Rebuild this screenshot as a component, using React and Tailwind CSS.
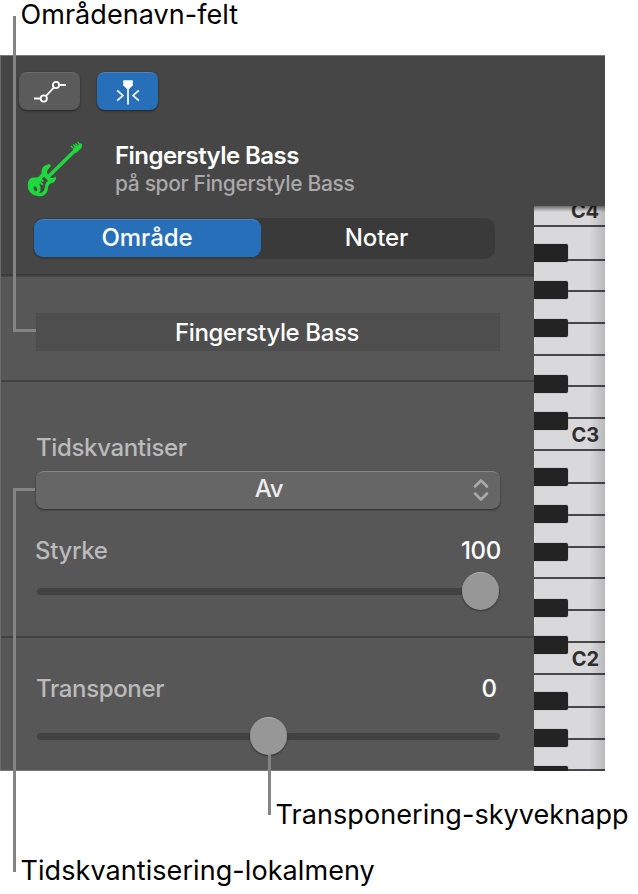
import React from 'react'

// key heights from the top of the visible keyboard, one per white key
const whiteKeys = [
    { h: 21, label: 'C4' }, { h: 34 }, { h: 31 }, { h: 32 }, { h: 32 }, { h: 31 }, { h: 32 },
    { h: 32, label: 'C3' }, { h: 33 }, { h: 32 }, { h: 32 }, { h: 31 }, { h: 32 }, { h: 32 },
    { h: 32, label: 'C2' }, { h: 33 }, { h: 32 }, { h: 31 },
]
const blackKeys = [38, 75, 112.5, 168.5, 205.5, 262, 299, 336.5, 392.5, 429.5, 486, 523, 560]

const Keyboard = () => {
    return <div className="relative w-[71px] h-[565px] shrink-0 overflow-hidden bg-[#d9d9db]">
        {whiteKeys.map((key, i) =>
            <div key={i} className="flex items-end justify-end border-b-2 border-[#49474a] pr-[6px] pb-[2px]" style={{ height: key.h }}>
                {key.label && <span className="text-[20px] leading-[24px] font-bold tracking-[-0.1px] text-[#303030]">{key.label}</span>}
            </div>
        )}
        <div className="absolute inset-y-0 right-0 w-4 bg-gradient-to-r from-transparent to-black/15" />
        <div className="absolute inset-x-0 top-0 h-1.5 bg-gradient-to-b from-black/50 to-transparent" />
        {blackKeys.map((top) =>
            <div key={top} className="absolute left-0 h-[18px] w-[34px] rounded-r-[2px] bg-[#232323] shadow-[0_0_1px_#555]" style={{ top: top }} />
        )}
    </div>
}

const Bass = () => {
    return <svg className="h-[56px] w-[56px] overflow-visible" viewBox="0 0 56 56" fill="none">
        <path d="M19 37 L47 9.5" stroke="#1fd83c" strokeWidth="3.4" />
        <path d="M44.8 8.5 L47.5 4.5 L50 4.5 L52 2.3 L54 3 L53.6 7 L48 12 L45.5 11.5 Z" fill="#1fd83c" />
        <path d="M43 5 l2 2 M45.2 3.6 l2 2 M47.4 2.4 l2 2 M49.8 .8 l1.6 2.6" stroke="#1fd83c" strokeWidth="1.4" />
        <path fillRule="evenodd" d="M.7 39.5 Q2 37 4.7 36.6 Q9 36.6 11 35.4 Q13.6 33.6 13.6 31 Q13.8 26.5 16.2 25 L20.7 22.9 Q23 23.2 23 25 Q21.5 26.5 20.3 28 Q18.6 29.8 19 32 L22.5 36.8 Q25.5 37.6 27.7 35.5 Q28.6 37.6 27 40 Q25.7 42.2 22.4 42.6 Q20.2 43.6 20 46.5 Q19.8 51.5 16 54.2 Q13.8 55.6 9.5 54.9 Q4.5 54.3 2 51.2 Q-.4 48.5 -.2 44 Q-.2 41 .7 39.5 Z M16.2 35.8 L20 39.8 Q17.6 41.6 17.2 44 Q17 49 14.6 51 Q13 52.4 11 52 Q13 49.5 12.6 47 Q12.3 44.8 11.4 43.2 Q13.4 41.4 13.6 39 Q14.2 36.6 16.2 35.8 Z M6 45.2 Q8.8 45.4 9.2 48 Q9.2 50.2 7.9 50.4 Q5.6 49 5.4 46.8 Z" fill="#1fd83c" />
        <path d="M13.4 38.6 L15.4 40.6 M12.4 41.4 L14.8 43.8" stroke="#1fd83c" strokeWidth="1.7" />
    </svg>
}

const Slider = (props) => {
    return <div className="relative flex h-[38px] w-[463px] items-center">
        <div className="h-[7px] w-full rounded-full bg-[#424242]" />
        <div
            className="absolute top-0 h-[38px] w-[37px] rounded-full border-t border-[#adadad] bg-[#979797] shadow-[0_1px_2px_rgba(0,0,0,0.45)]"
            style={{ left: props.left }}
        />
    </div>
}

const Header = () => {
    return <div className="h-[151px] border-t border-[#7a7a7a] bg-[#464646] pt-4">
        <div className="ml-[19px] flex gap-[17px]">
            <button className="flex h-[38px] w-[61px] items-center justify-center rounded-lg border-t border-[#6b6b6b] bg-[#5b5b5b] shadow-[0_1px_2px_rgba(0,0,0,0.5)]">
                <svg className="h-6 w-[34px]" viewBox="0 0 34 24" fill="none" stroke="#fff" strokeWidth="1.8">
                    <path d="M1 18.5 H7.4 M13 16 L20.8 7.6 M26.5 5 H33" />
                    <circle cx="10.8" cy="18.5" r="3.1" />
                    <circle cx="23" cy="5" r="3.1" />
                </svg>
            </button>
            <button className="flex h-[38px] w-[61px] items-center justify-center rounded-lg border-t border-[#4583c2] bg-[#286fba] shadow-[0_1px_2px_rgba(0,0,0,0.5)]">
                <svg className="h-[26px] w-[26px]" viewBox="0 0 26 26" fill="none" stroke="#fff" strokeWidth="1.7">
                    <path d="M8.2 1.8 Q8.2 1.2 8.8 1.2 H17.2 Q17.8 1.2 17.8 1.8 V6.3 L14.3 9.7 H11.7 L8.2 6.3 Z" fill="#fff" stroke="none" />
                    <path d="M13 9 V25.5 M2.2 11.3 L7.8 16.5 L2.2 21.7 M23.8 11.3 L18.2 16.5 L23.8 21.7" />
                </svg>
            </button>
        </div>
        <div className="mt-[31px] ml-[28px] flex">
            <Bass />
            <div className="ml-[31px] pt-px whitespace-nowrap">
                <h1 className="text-[24px] leading-[28px] font-semibold tracking-[-0.55px] text-white">Fingerstyle Bass</h1>
                <p className="text-[21px] leading-[28px] font-medium tracking-[-0.35px] text-[#a9a9a9]">på spor Fingerstyle Bass</p>
            </div>
        </div>
    </div>
}

const Inspector = () => {
    return <div className="relative w-[534px] bg-[#575757] text-[24px] leading-[28px] text-[#bababa]">
        <div className="h-[68px] bg-[#464646] pt-3 pl-[33px]">
            <div className="flex h-[41px] w-[462px] rounded-[10px] bg-[#3a3a3a] p-px font-medium tracking-[-0.05px] text-white">
                <button className="h-[38px] w-[227px] rounded-[9px] border-t border-[#4583c2] bg-[#286fba] pr-px pb-px">Område</button>
                <button className="h-[38px] grow pr-[2px]">Noter</button>
            </div>
        </div>
        <div className="h-[3px] bg-gradient-to-b from-[#353535] to-[#4c4c4c]" />
        <div className="flex h-[103px] items-start pt-9 pl-9">
            <div className="flex h-[38px] w-[464px] items-center justify-center border border-[#4c4c4c] bg-[#4e4e4e] pt-px pr-[2px] font-medium tracking-[-0.38px] text-white">Fingerstyle Bass</div>
        </div>
        <div className="h-[256px] border-t-2 border-[#434343] pt-[52px] pl-9">
            <div className="font-medium tracking-[-0.35px]">Tidskvantiser</div>
            <button className="relative mt-[9px] ml-[-0.5px] flex h-[38px] w-[464px] items-center justify-center rounded-lg border-t border-[#858585] bg-[#666666] pb-[3px] pl-[3px] font-medium tracking-[-0.4px] text-[#ececec] shadow-[0_1px_2px_rgba(0,0,0,0.5)]">
                Av
                <svg className="absolute top-[6px] right-[11px] h-6 w-4" viewBox="0 0 16 24" fill="none" stroke="#a9a9a9" strokeWidth="2.6" strokeLinecap="round" strokeLinejoin="round">
                    <path d="M2 8.5 L8 2.5 L14 8.5 M2 15.5 L8 21.5 L14 15.5" />
                </svg>
            </button>
            <div className="mt-7 flex w-[465px] justify-between">
                <span className="ml-[-1px] font-medium tracking-[-0.35px]">Styrke</span>
                <span className="font-medium tracking-[-0.3px] text-white">100</span>
            </div>
            <div className="mt-[7px] ml-px"><Slider left={425} /></div>
        </div>
        <div className="h-[135px] border-t-2 border-[#434343] pt-[37px] pl-9">
            <div className="flex w-[461px] justify-between">
                <span className="font-medium tracking-[-0.35px]">Transponer</span>
                <span className="font-medium text-white">0</span>
            </div>
            <div className="mt-[14px] ml-px"><Slider left={212.5} /></div>
        </div>
    </div>
}

const App = () => {
    return <div className="relative h-[894px] w-[638px] overflow-hidden bg-white font-['Inter','Liberation_Sans',sans-serif] whitespace-nowrap">
        <div className="h-[55px] pl-[20.5px] text-[27px] leading-[30px] tracking-[0.05px] text-black">Områdenavn-felt</div>
        <div className="w-[605px]">
            <Header />
            <div className="flex">
                <Inspector />
                <Keyboard />
            </div>
        </div>
        <div className="mt-[29px] pl-[275.5px] text-[27px] leading-[30px] tracking-[0.07px] text-black">Transponering-skyveknapp</div>
        <div className="mt-[26px] pl-[20.5px] text-[27px] leading-[30px] tracking-[0.07px] text-black">Tidskvantisering-lokalmeny</div>

        {/* callout lines, drawn over the panel */}
        <div className="absolute top-[55px] left-0 h-[716px] w-px bg-[#6c6c6c]" />
        <div className="absolute top-[770px] left-0 h-px w-[534px] bg-[#7c7c7c]" />
        <div className="absolute top-4 left-[13px] h-[316px] w-[23px] border-b-[3px] border-l-[3px] border-[#848484]" />
        <div className="absolute top-[488px] left-[13px] h-[384px] w-[22px] border-l-[3px] border-[#848484]">
            <div className="h-[3px] bg-[#848484]" />
        </div>
        <div className="absolute top-[755px] left-[268px] h-[60px] w-[3px] bg-[#848484]" />
    </div>
}

export default App
